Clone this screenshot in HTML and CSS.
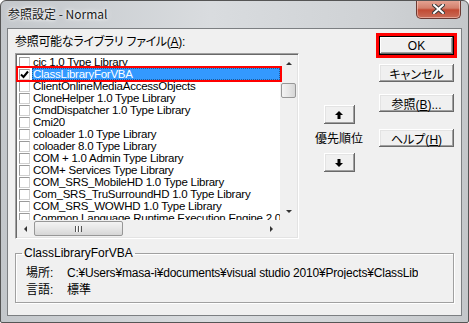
FILE: index.html
```html
<!DOCTYPE html>
<html lang="ja">
<head>
    <meta charset="UTF-8">
    <title>参照設定 - Normal</title>
    <link rel="stylesheet" href="styles.css">
</head>
<body>

    <div class="window">
        <div class="titlebar">
            <span class="title">参照設定 - Normal</span>
            <div class="close">
                <svg width="13" height="10" viewBox="0 0 13 10">
                    <path d="M2 1 L11 9 M11 1 L2 9" stroke="#3a3a3a" stroke-width="4" stroke-linecap="square"/>
                    <path d="M2 1 L11 9 M11 1 L2 9" stroke="#fff" stroke-width="2" stroke-linecap="square"/>
                </svg>
            </div>
        </div>

        <div class="frame">
            <div class="client">
                <div class="top">
                    <div class="lib-col">
                        <div class="label">参照可能なライブラリ ファイル(<u>A</u>):</div>
                        <div class="listbox">
                            <div class="list-main">
                                <div class="rows" id="rows"></div>
                                <div class="vscroll">
                                    <div class="sb-btn"><span class="tri up"></span></div>
                                    <div class="sb-track">
                                        <div class="vthumb"></div>
                                    </div>
                                    <div class="sb-btn"><span class="tri down"></span></div>
                                </div>
                            </div>
                            <div class="hscroll">
                                <div class="sb-btn"><span class="tri left"></span></div>
                                <div class="hs-track">
                                    <div class="hthumb"><span class="grip"></span></div>
                                </div>
                                <div class="sb-btn"><span class="tri right"></span></div>
                                <div class="corner"></div>
                            </div>
                            <!-- red annotation around the selected entry -->
                            <div class="mark-row"></div>
                        </div>
                    </div>

                    <div class="priority">
                        <button class="btn arrow-btn">
                            <svg width="8" height="8" viewBox="0 0 8 8"><polygon points="4,0 8,4 5.5,4 5.5,8 2.5,8 2.5,4 0,4" fill="#000"/></svg>
                        </button>
                        <div class="prio-label">優先順位</div>
                        <button class="btn arrow-btn">
                            <svg width="8" height="8" viewBox="0 0 8 8"><polygon points="4,8 8,4 5.5,4 5.5,0 2.5,0 2.5,4 0,4" fill="#000"/></svg>
                        </button>
                    </div>

                    <div class="actions">
                        <button class="btn default marked">OK</button>
                        <button class="btn cancel">キャンセル</button>
                        <button class="btn browse">参照(<u>B</u>)...</button>
                        <button class="btn help">ヘルプ(<u>H</u>)</button>
                    </div>
                </div>

                <fieldset class="info">
                    <legend>ClassLibraryForVBA</legend>
                    <div class="info-grid">
                        <span>場所:</span>
                        <span class="path">C:¥Users¥masa-i¥documents¥visual studio 2010¥Projects¥ClassLibraryForVBA¥ClassLibraryForVBA.tlb</span>
                        <span>言語:</span>
                        <span>標準</span>
                    </div>
                </fieldset>
            </div>
        </div>
    </div>

    <script>
        // library list as shown in the dialog
        const libs = [
            { name: "cic 1.0 Type Library", checked: false },
            { name: "ClassLibraryForVBA", checked: true, selected: true },
            { name: "ClientOnlineMediaAccessObjects", checked: false },
            { name: "CloneHelper 1.0 Type Library", checked: false },
            { name: "CmdDispatcher 1.0 Type Library", checked: false },
            { name: "Cmi20", checked: false },
            { name: "coloader 1.0 Type Library", checked: false },
            { name: "coloader 8.0 Type Library", checked: false },
            { name: "COM + 1.0 Admin Type Library", checked: false },
            { name: "COM+ Services Type Library", checked: false },
            { name: "COM_SRS_MobileHD 1.0 Type Library", checked: false },
            { name: "Com_SRS_TruSurroundHD 1.0 Type Library", checked: false },
            { name: "COM_SRS_WOWHD 1.0 Type Library", checked: false },
            { name: "Common Language Runtime Execution Engine 2.0 Library", checked: false }
        ];

        const rows = document.getElementById("rows");
        const tick = '<svg width="9" height="9" viewBox="0 0 9 9"><path d="M1 4.5 L3.5 7 L8 1.5" stroke="#000" stroke-width="2" fill="none"/></svg>';

        libs.forEach(lib => {
            const row = document.createElement("div");
            row.className = lib.selected ? "row selected" : "row";
            row.innerHTML = `
                <span class="chk">${lib.checked ? tick : ""}</span>
                <span class="name">${lib.name}</span>
            `;
            rows.appendChild(row);
        });
    </script>

</body>
</html>
```

FILE: styles.css
```css
body {
    margin: 0;
    background: #fff;
    font-family: "Liberation Sans", "Noto Sans CJK JP", sans-serif;
    font-size: 12px;
    color: #000;
}

.window {
    width: 469px;
    height: 323px;
    box-sizing: border-box;
    border: 1px solid #555;
    border-radius: 6px 6px 2px 2px;
    background: linear-gradient(to right, #c3c7cb, #d9dcdf 45%, #cfd2d5 80%, #c4c7ca);
    display: flex;
    flex-direction: column;
    overflow: hidden;
}

.titlebar {
    height: 27px;
    display: flex;
    justify-content: space-between;
    align-items: flex-start;
    padding-left: 7px;
}

.title {
    font-family: "Noto Sans CJK JP", sans-serif;
    font-feature-settings: "palt" 1;
    font-size: 12px;
    line-height: 26px;
    color: #1a1a1a;
    text-shadow: 0 0 6px #fff, 0 0 3px #fff;
}

.close {
    width: 45px;
    height: 19px;
    margin-top: -1px;
    margin-right: 7px;
    box-sizing: border-box;
    border: 1px solid #6b3a33;
    border-top: none;
    border-radius: 0 0 5px 5px;
    background: linear-gradient(#e6a696, #d3806c 45%, #c24a33 55%, #c96d58);
    display: flex;
    align-items: center;
    justify-content: center;
    box-shadow: inset 0 0 0 1px rgba(255, 220, 210, 0.5);
}

.frame {
    flex: 1;
    padding: 0 6px 6px 6px;
    display: flex;
}

.client {
    flex: 1;
    background: #f0f0f0;
    border: 1px solid #7c7f82;
    padding: 7px 7px 0 7px;
    display: flex;
    flex-direction: column;
}

.top {
    display: grid;
    grid-template-columns: 284px 1fr 75px;
}

.label {
    font-feature-settings: "palt" 1;
    letter-spacing: -0.3px;
    line-height: 12px;
    height: 12px;
    margin-bottom: 5px;
}

/* list box with sunken border */
.listbox {
    position: relative;
    width: 284px;
    height: 186px;
    box-sizing: border-box;
    border: 1px solid;
    border-color: #a0a0a0 #fff #fff #a0a0a0;
    box-shadow: inset 1px 1px 0 #696969, inset -1px -1px 0 #e3e3e3;
    padding: 1px;
    display: flex;
    flex-direction: column;
}

.list-main {
    flex: 1;
    display: flex;
    min-height: 0;
}

.rows {
    flex: 1;
    background: #fff;
    overflow: hidden;
    padding-top: 1px;
}

.row {
    height: 12px;
    display: flex;
    align-items: center;
    white-space: nowrap;
    line-height: 12px;
}

.chk {
    width: 11px;
    height: 11px;
    margin: 0 2px 0 2px;
    box-sizing: border-box;
    border: 1px solid;
    border-color: #9a9a9a #d0d0d0 #d0d0d0 #9a9a9a;
    background: #fff;
    flex: none;
    display: flex;
    align-items: center;
    justify-content: center;
}

.name {
    flex: 1;
    height: 12px;
    padding-left: 1px;
    font-size: 11.5px;
    letter-spacing: -0.25px;
    overflow: hidden;
}

.row.selected .name {
    background: #3399ff;
    color: #fff;
    outline: 1px dotted #1d5a99;
    outline-offset: -1px;
}

.mark-row {
    position: absolute;
    left: 0;
    top: 12px;
    width: 266px;
    height: 16px;
    box-sizing: border-box;
    border: 2px solid #f00;
}

/* scrollbars */
.vscroll {
    width: 17px;
    background: #f0f0f0;
    display: flex;
    flex-direction: column;
}

.sb-btn {
    width: 17px;
    height: 17px;
    flex: none;
    display: flex;
    align-items: center;
    justify-content: center;
}

.sb-track {
    flex: 1;
    padding-top: 11px;
}

.vthumb {
    width: 15px;
    height: 15px;
    margin-left: 1px;
    box-sizing: border-box;
    border: 1px solid #979797;
    border-radius: 2px;
    background: linear-gradient(to right, #f3f3f3, #e6e6e6 50%, #d6d6d6);
}

.hscroll {
    height: 17px;
    flex: none;
    display: flex;
    background: #f0f0f0;
}

.hs-track {
    flex: 1;
    display: flex;
    align-items: center;
}

.hthumb {
    width: 89px;
    height: 15px;
    box-sizing: border-box;
    border: 1px solid #979797;
    border-radius: 2px;
    background: linear-gradient(#f3f3f3, #e6e6e6 50%, #d6d6d6);
    display: flex;
    align-items: center;
    justify-content: center;
}

.grip {
    width: 7px;
    height: 6px;
    background: repeating-linear-gradient(to right, #555 0 1px, #fff 1px 2px, transparent 2px 3px);
}

.corner {
    width: 17px;
    background: #f0f0f0;
}

.tri {
    width: 0;
    height: 0;
    border-style: solid;
}

.tri.up {
    border-width: 0 3px 3px 3px;
    border-color: transparent transparent #333 transparent;
}

.tri.down {
    border-width: 3px 3px 0 3px;
    border-color: #333 transparent transparent transparent;
}

.tri.left {
    border-width: 3px 3px 3px 0;
    border-color: transparent #333 transparent transparent;
}

.tri.right {
    border-width: 3px 0 3px 3px;
    border-color: transparent transparent transparent #333;
}

/* classic push buttons */
.btn {
    font-family: "Liberation Sans", "Noto Sans CJK JP", sans-serif;
    font-feature-settings: "palt" 1;
    font-size: 12px;
    color: #000;
    background: #f0f0f0;
    border: none;
    padding: 0;
    box-shadow: inset -1px -1px 0 #696969, inset 1px 1px 0 #fff, inset -2px -2px 0 #a0a0a0, inset 2px 2px 0 #e3e3e3;
    cursor: pointer;
}

.actions {
    display: flex;
    flex-direction: column;
}

.actions .btn {
    width: 75px;
    height: 19px;
}

.actions .cancel {
    margin-top: 9px;
    height: 18px;
}

.actions .browse {
    margin-top: 12px;
    height: 18px;
}

.actions .help {
    margin-top: 17px;
    height: 18px;
}

.btn.default {
    box-shadow: inset 0 0 0 1px #000, inset -2px -2px 0 #696969, inset 2px 2px 0 #fff, inset -3px -3px 0 #a0a0a0;
}

.btn.marked {
    outline: 3px solid #f00;
    outline-offset: 0;
}

.priority {
    display: flex;
    flex-direction: column;
    align-items: center;
    padding-top: 69px;
}

.arrow-btn {
    width: 31px;
    height: 19px;
    display: flex;
    align-items: center;
    justify-content: center;
}

.prio-label {
    margin: 9px 0 8px;
    line-height: 12px;
}

/* group box at the bottom */
.info {
    margin: 8px 0 0 0;
    padding: 0;
    height: 56px;
    box-sizing: border-box;
    border: 1px solid #a0a0a0;
    box-shadow: inset 1px 1px 0 #fff, 1px 1px 0 #fff;
}

.info legend {
    margin-left: 6px;
    padding: 0 2px;
    line-height: 12px;
}

.info-grid {
    display: grid;
    grid-template-columns: 41px 351px;
    row-gap: 5px;
    padding: 8px 0 0 10px;
    line-height: 12px;
    font-feature-settings: "palt" 1;
}

.path {
    white-space: nowrap;
    overflow: hidden;
    letter-spacing: -0.2px;
}
```
